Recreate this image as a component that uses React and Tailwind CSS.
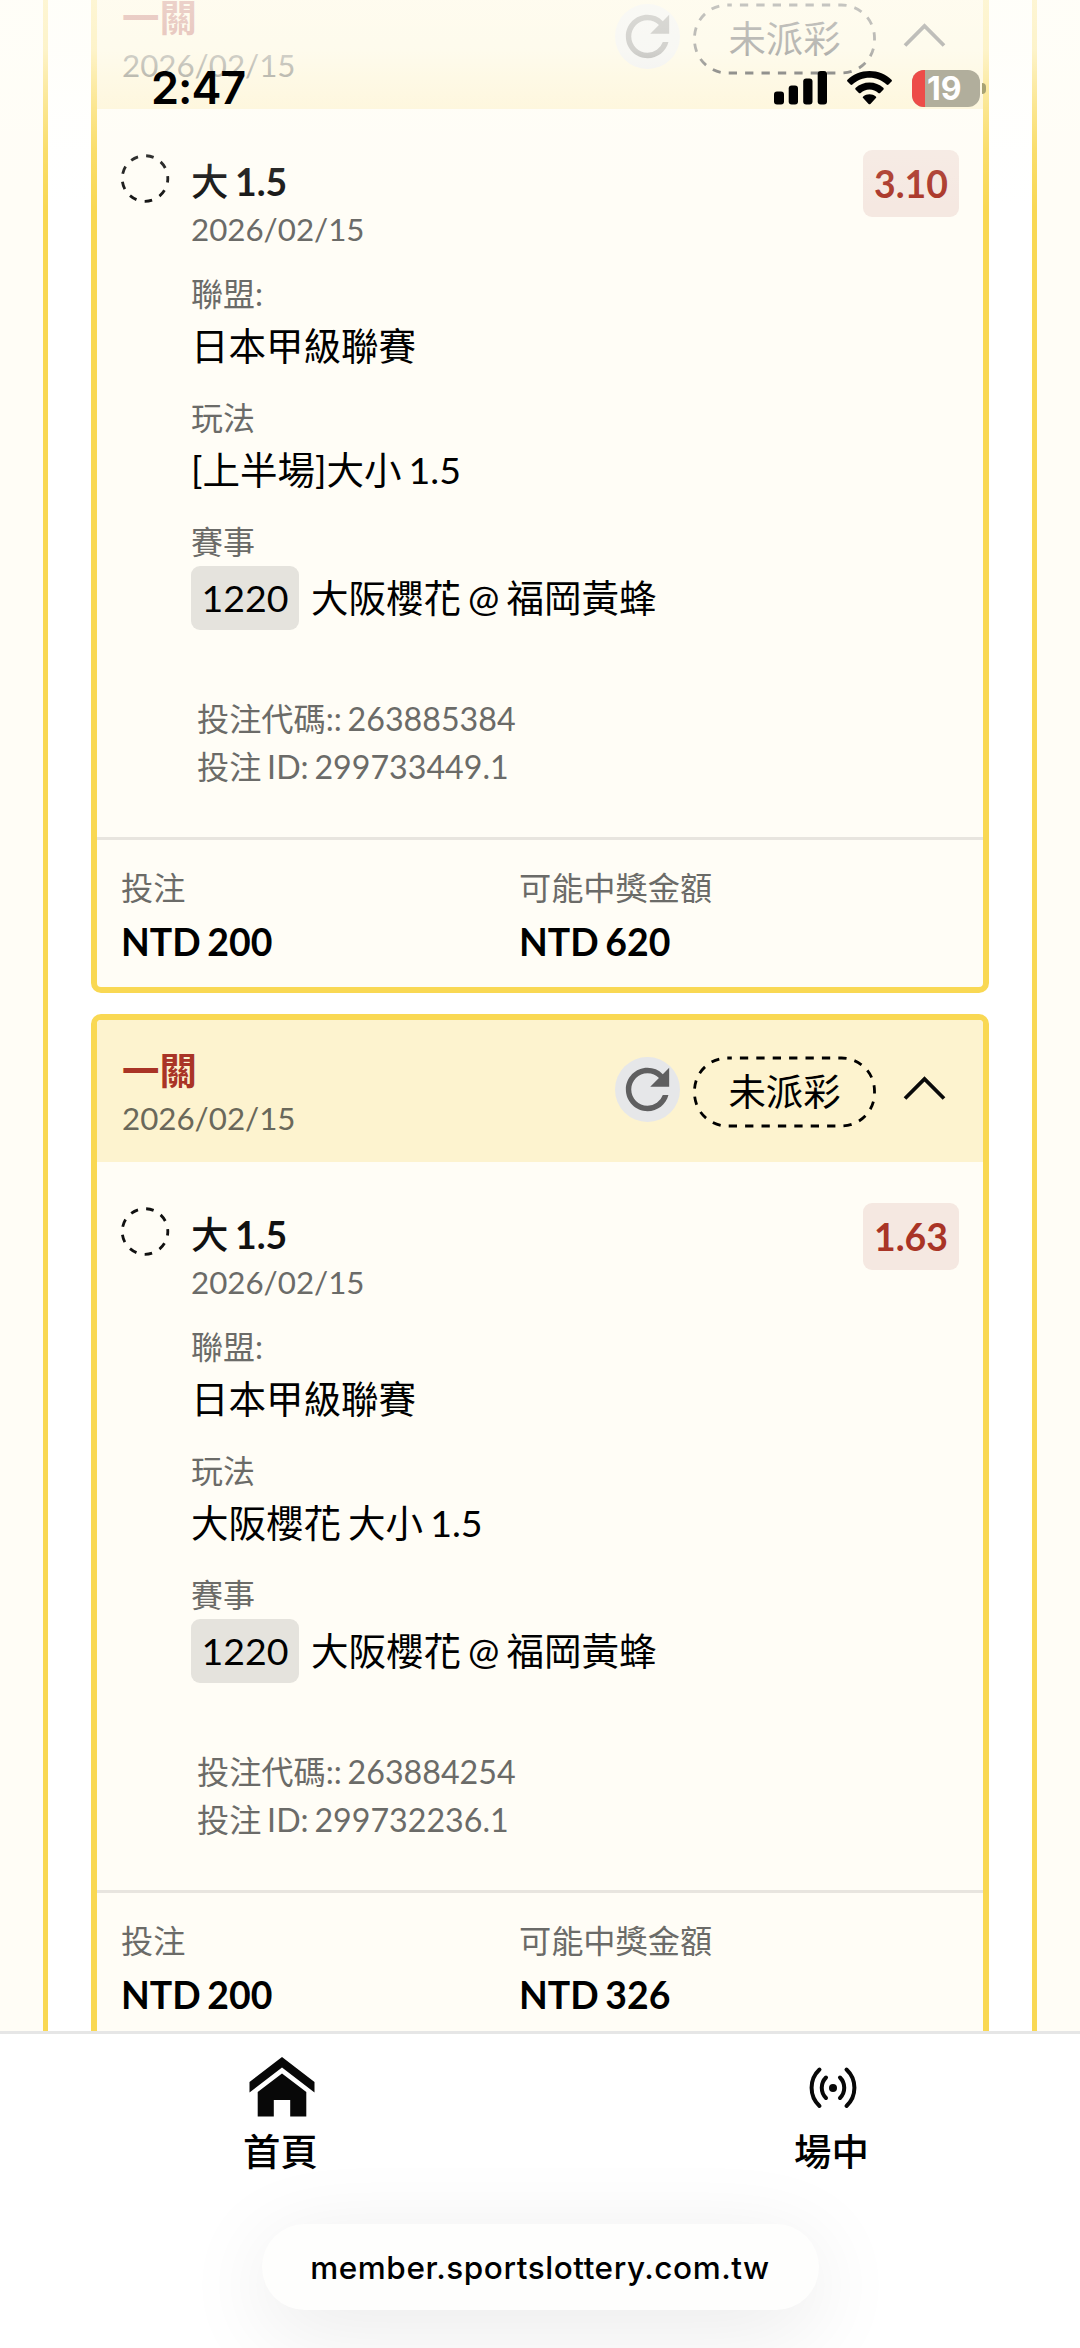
import { MdRefresh } from "react-icons/md"

const apostas = [
  {
    id: "299733449.1",
    codigo: "263885384",
    odd: "3.10",
    mercado: "[上半場]大小 1.5",
    valor: "NTD 200",
    premio: "NTD 620",
  },
  {
    id: "299732236.1",
    codigo: "263884254",
    odd: "1.63",
    mercado: "大阪櫻花 大小 1.5",
    valor: "NTD 200",
    premio: "NTD 326",
  },
]

function Campo({ titulo, children }) {
  return (
    <div className="h-[124px]">
      <p className="text-[32px] leading-[48px] text-[#6b6b68]">{titulo}</p>
      <div className="text-[37.5px] leading-[56px] text-black">{children}</div>
    </div>
  )
}

function CardHeader() {
  return (
    <div className="h-[142px] bg-[#fdf3cf] flex items-start justify-between pl-[25px] pr-[37px]">
      <div className="pt-[25px]">
        <p className="text-[37.4px] leading-[52px] font-bold text-[#a93426]">一關</p>
        <p className="-mt-[1px] text-[31.3px] leading-[44px] text-[#6a685a]">2026/02/15</p>
      </div>

      <div className="flex items-center pt-[36px]">
        <button className="w-[65px] h-[65px] -mt-1.5 rounded-full bg-[#e6e7e9] text-[#5f5f60] flex items-center justify-center">
          <MdRefresh size={65} />
        </button>
        <div className="relative w-[183px] h-[72px] ml-[13px] flex items-center justify-center">
          <svg className="absolute inset-0" width="183" height="72" viewBox="0 0 183 72" fill="none">
            <rect x="1.5" y="2" width="180" height="68" rx="33" stroke="#000" strokeWidth="2.8" strokeDasharray="8.3 8.1" strokeDashoffset="4" />
          </svg>
          <span className="text-[37.4px] leading-[56px] text-black">未派彩</span>
        </div>
        <svg className="ml-[27px] -mt-[9px]" width="43" height="26" viewBox="0 0 43 26" fill="none">
          <path d="M2 23.5 21.5 4 41 23.5" stroke="#0a0a0a" strokeWidth="3.8" />
        </svg>
      </div>
    </div>
  )
}

function CardAposta({ aposta }) {
  return (
    <div className="h-[1032px] shrink-0 rounded-[10px] border-[6px] border-[#f9d853] bg-[#fffdf6] overflow-hidden">
      <CardHeader />

      <div className="h-[728px] flex items-start pl-[24px] pr-[24px] pt-[40px]">
        <svg className="mt-[5px] shrink-0" width="49" height="49" viewBox="0 0 49 49" fill="none">
          <circle cx="24" cy="24.5" r="22.8" stroke="#111" strokeWidth="2.8" strokeDasharray="7.6 8.32" strokeDashoffset="3.5" />
        </svg>

        <div className="ml-[21px] flex-1">
          <p className="pt-[5px] text-[37.4px] leading-[56px] font-bold text-[#111]">
            <span className="font-medium">大</span> 1.5
          </p>
          <p className="-mt-[1px] text-[31.3px] leading-[40px] text-[#6b6b68]">2026/02/15</p>

          <div className="pt-[21px]">
            <Campo titulo="聯盟:">日本甲級聯賽</Campo>
            <Campo titulo="玩法">{aposta.mercado}</Campo>
            <Campo titulo="賽事">
              <div className="flex items-center gap-[12px]">
                <span className="w-[108px] h-[64px] rounded-[9px] bg-[#e5e3dd] flex items-center justify-center">1220</span>
                <span>大阪櫻花 @ 福岡黃蜂</span>
              </div>
            </Campo>
          </div>

          <div className="pt-[53px] pl-[6px] text-[32.2px] leading-[48px] text-[#6b6b68]">
            <p>投注代碼:: {aposta.codigo}</p>
            <p>投注 ID: {aposta.id}</p>
          </div>
        </div>

        <span className="mt-[1px] pt-[1px] w-[96px] h-[67px] rounded-[9px] bg-[#f5e8e1] text-[#a93426] text-[37.4px] font-bold flex items-center justify-center">
          {aposta.odd}
        </span>
      </div>

      {/* RODAPÉ: valor apostado e prêmio possível */}
      <div className="h-[150px] border-t-[3px] border-[#e8e5df] pl-[24px] pt-[24px] flex">
        <div className="w-[398px]">
          <p className="text-[32.2px] leading-[48px] text-[#6b6b68]">投注</p>
          <p className="pt-[2px] text-[37.4px] leading-[56px] font-bold text-black">{aposta.valor}</p>
        </div>
        <div>
          <p className="text-[32.2px] leading-[48px] text-[#6b6b68]">可能中獎金額</p>
          <p className="pt-[2px] text-[37.4px] leading-[56px] font-bold text-black">{aposta.premio}</p>
        </div>
      </div>
    </div>
  )
}

function StatusBar() {
  return (
    <div className="absolute top-0 left-0 w-full h-[220px] bg-[linear-gradient(to_bottom,rgba(255,254,248,0.78)_0px,rgba(255,254,248,0.72)_50px,rgba(255,254,248,0.56)_75px,rgba(255,254,248,0.37)_108px,rgba(255,254,248,0.15)_150px,rgba(255,254,248,0)_210px)]">
      <div className="flex items-center justify-between pl-[151px] pr-[94px] pt-[60px]">
        <span className="font-['Inter',sans-serif] font-semibold text-[45px] leading-[56px] tracking-[-1px] text-black">2:47</span>
        <div className="flex items-center">
          <svg width="54" height="34" viewBox="0 0 54 34">
            <rect x="0" y="20.5" width="10" height="13" rx="3" />
            <rect x="14.7" y="14.5" width="9.3" height="19" rx="3" />
            <rect x="29.2" y="7.5" width="9.3" height="26" rx="3" />
            <rect x="43.7" y="0" width="9.3" height="33.5" rx="3" />
          </svg>
          <svg className="ml-[19px]" width="45" height="34" viewBox="0 0 45 34">
            <path d="M22.5 0C14 0 6.200 3.200.5 8.700c-.6.6-.6 1.300 0 1.900l3 3c.5.5 1.300.5 1.900 0C10 9.300 16 6.800 22.500 6.800s12.500 2.500 17.100 6.800c.6.5 1.400.5 1.900 0l3-3c.6-.6.6-1.300 0-1.900C38.800 3.200 31 0 22.500 0z" />
            <path d="M22.500 11.500c-5.300 0-10.100 2-13.800 5.300-.6.6-.6 1.300 0 1.900l3.200 3.200c.5.5 1.200.5 1.800 0 2.400-2.100 5.400-3.400 8.800-3.400s6.400 1.300 8.800 3.400c.6.5 1.300.5 1.800 0l3.200-3.200c.6-.6.6-1.300 0-1.900-3.700-3.300-8.500-5.300-13.800-5.300z" />
            <path d="M22.500 23.200c-2.400 0-4.600.8-6.300 2.200-.6.5-.6 1.200-.1 1.700l5.500 5.800c.5.500 1.300.5 1.800 0l5.500-5.800c.5-.5.5-1.200-.1-1.700-1.700-1.400-3.900-2.200-6.300-2.200z" />
          </svg>
          <div className="ml-[20px] w-[68px] h-[37px] rounded-[12px] overflow-hidden bg-[#b1ae9c] flex items-center">
            <span className="w-[13px] h-full bg-[#ed4c49]" />
            <span className="ml-[2px] font-['Inter',sans-serif] font-bold text-[32px] leading-[37px] text-white">19</span>
          </div>
          <span className="ml-[2px] w-[4px] h-[11px] rounded-r-full bg-[#a8a273]" />
        </div>
      </div>
    </div>
  )
}

function BottomNav() {
  return (
    <div className="h-[317px] border-t-[3px] border-[#e6e6e6] bg-white flex flex-col items-center overflow-hidden">
      <div className="w-full h-[190px] pl-[243px] flex gap-[476px]">
        <div className="w-[75px] pt-[23px] flex flex-col items-center">
          <svg className="ml-[3px]" width="66" height="60" viewBox="0 0 66 60" fill="#080808">
            <path d="M33 0 65.500 25v10.500L33 10.500.5 35.500V25z" />
            <path d="M33 16.500 57.300 35v24.500H41.200V43H24.800v16.500H8.700V35z" />
          </svg>
          <span className="mt-[7px] text-[37.4px] leading-[56px] font-medium text-black">首頁</span>
        </div>
        <div className="w-[75px] pt-[23px] flex flex-col items-center">
          <svg className="ml-[3px]" width="50" height="60" viewBox="0 0 50 60" fill="none" stroke="#080808" strokeWidth="4" strokeLinecap="round">
            <circle cx="25" cy="31" r="4" fill="#080808" stroke="none" />
            <path d="M18 20.500a14.500 14.500 0 0 0 0 20.500M32 20.500a14.500 14.500 0 0 1 0 20.500" />
            <path d="M11.500 12.500a25 25 0 0 0 0 36.500M38.500 12.500a25 25 0 0 1 0 36.500" />
          </svg>
          <span className="mt-[7px] text-[37.4px] leading-[56px] font-medium text-black">場中</span>
        </div>
      </div>
      <div className="w-[557px] h-[86px] rounded-full bg-[#fefefd] shadow-[0_18px_90px_rgba(0,0,0,0.09)] flex items-center justify-center">
        <span className="pt-[1px] font-['Inter',sans-serif] font-medium text-[31.5px] tracking-[0.55px] text-black">member.sportslottery.com.tw</span>
      </div>
    </div>
  )
}

export default function App() {
  return (
    <div className="relative w-[1080px] h-[2348px] overflow-hidden bg-[#fffdf6] font-['Lato','Noto_Sans_CJK_TC',sans-serif]">
      <div className="h-[2031px] overflow-hidden [word-spacing:-2.5px]">
        <div className="mx-[43px] h-full px-[43px] border-x-[5px] border-[#f9d853] bg-white overflow-hidden">
          {/* a lista está rolada, o primeiro card começa fora da tela */}
          <div className="-mt-[39px] flex flex-col gap-[21px]">
            {apostas.map((aposta) => (
              <CardAposta key={aposta.id} aposta={aposta} />
            ))}
          </div>
        </div>
      </div>
      <BottomNav />
      <StatusBar />
    </div>
  )
}
